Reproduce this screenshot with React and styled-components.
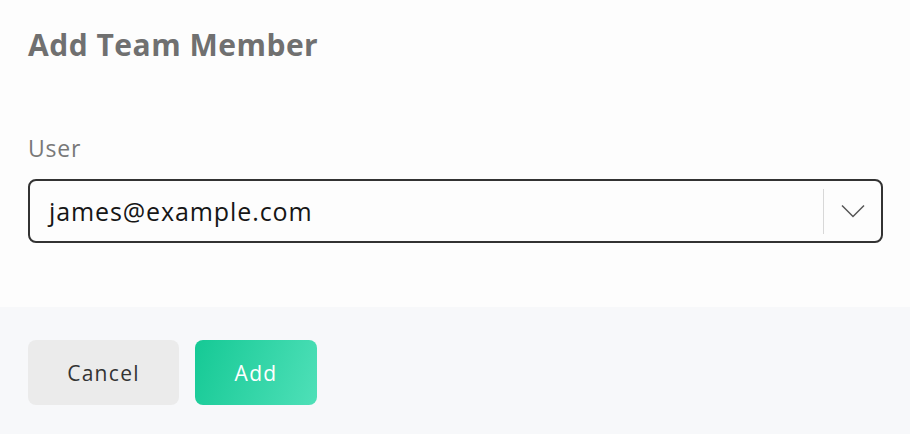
import React from 'react';
import styled, { createGlobalStyle } from 'styled-components';

const Global = createGlobalStyle`
  html, body {
    margin: 0;
    background: #f7f8fa;
    font-family: "Open Sans", "Noto Sans", sans-serif;
  }
`;

const Modal = styled.div`
  width: 910px;
  height: 434px;
  display: flex;
  flex-direction: column;
`;

const Body = styled.div`
  background: #fdfdfd;
  padding: 27px 27px 0 28px;
  height: 307px;
  box-sizing: border-box;
`;

const Title = styled.h2`
  margin: 0;
  font-size: 30px;
  font-weight: 700;
  line-height: 36px;
  letter-spacing: 0.5px;
  color: #707070;
`;

const Label = styled.label`
  display: block;
  margin-top: 71px;
  font-size: 23px;
  line-height: 28px;
  letter-spacing: 0.8px;
  color: #787878;
`;

const Select = styled.div`
  margin-top: 17px;
  height: 64px;
  box-sizing: border-box;
  border: 2px solid #333;
  border-radius: 8px;
  display: flex;
  align-items: center;
  padding-left: 19px;
`;

const Value = styled.span`
  flex: 1;
  font-size: 25px;
  letter-spacing: 0.9px;
  color: #161616;
`;

const Divider = styled.span`
  width: 1px;
  height: 45px;
  background: #d8d8d8;
`;

const Chevron = styled.span`
  width: 57px;
  display: flex;
  justify-content: center;
  align-items: center;
`;

const Footer = styled.div`
  flex: 1;
  background: #f7f8fa;
  display: flex;
  gap: 16px;
  padding: 33px 28px 0;
  align-items: flex-start;
`;

const Button = styled.button`
  height: 65px;
  width: ${p => p.$w}px;
  border: none;
  border-radius: 8px;
  font-family: "Open Sans", "Noto Sans", sans-serif;
  font-size: 21px;
  letter-spacing: 1.3px;
  cursor: pointer;
  color: ${p => (p.$primary ? '#fff' : '#333')};
  background: ${p =>
    p.$primary ? 'linear-gradient(110deg, #15c995 0%, #4fe0b8 100%)' : '#ebebeb'};
`;

export default function App() {
  return (
    <Modal>
      <Global />
      <Body>
        <Title>Add Team Member</Title>
        <Label>User</Label>
        <Select>
          <Value>james@example.com</Value>
          <Divider />
          <Chevron>
            <svg width="24" height="14" viewBox="0 0 24 14" fill="none">
              <path d="M1 1.5 L12 12.5 L23 1.5" stroke="#555" strokeWidth="1.5" />
            </svg>
          </Chevron>
        </Select>
      </Body>
      <Footer>
        <Button $w={151}>Cancel</Button>
        <Button $w={122} $primary>Add</Button>
      </Footer>
    </Modal>
  );
}
